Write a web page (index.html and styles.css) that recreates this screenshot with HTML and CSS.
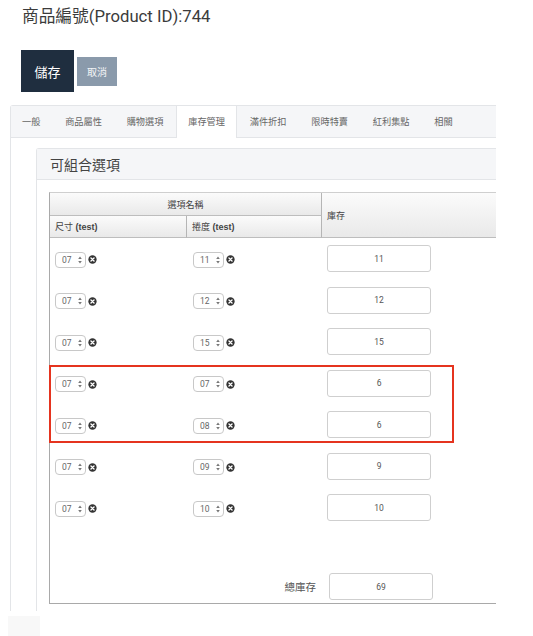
FILE: index.html
```html
<!DOCTYPE html>
<html lang="zh-Hant">
<head>
<meta charset="utf-8">
<title>商品編號</title>
<link rel="stylesheet" href="styles.css">
</head>
<body>
<div class="page">
  <h1 class="title">商品編號(Product ID):744</h1>
  <div class="actions">
    <button class="btn btn-save">儲存</button>
    <button class="btn btn-cancel">取消</button>
  </div>
  <div class="tabs-wrap">
    <ul class="tabs">
      <li class="tab first">一般</li>
      <li class="tab">商品屬性</li>
      <li class="tab">購物選項</li>
      <li class="tab active">庫存管理</li>
      <li class="tab">滿件折扣</li>
      <li class="tab">限時特賣</li>
      <li class="tab">紅利集點</li>
      <li class="tab">相關</li>
    </ul>
    <div class="tab-content">
      <div class="panel">
        <div class="panel-head">可組合選項</div>
        <div class="panel-body">
          <div class="grid-wrap">
            <table class="grid">
              <colgroup><col class="c1"><col class="c2"><col class="c3"></colgroup>
              <thead>
                <tr><th colspan="2" class="center">選項名稱</th><th rowspan="2" class="stock-h">庫存</th></tr>
                <tr><th>尺寸 <b>(test)</b></th><th>捲度 <b>(test)</b></th></tr>
              </thead>
              <tbody>
                <tr><td><span class="sel">07<svg class="arr" viewBox="0 0 4 8"><path d="M2 0.5 L3.8 3 H0.2Z M2 7.5 L3.8 5 H0.2Z"/></svg></span><svg class="rm" viewBox="0 0 10 10"><circle cx="5" cy="5" r="4.6"/><path d="M3.3 3.3 L6.7 6.7 M6.7 3.3 L3.3 6.7"/></svg></td><td><span class="sel">11<svg class="arr" viewBox="0 0 4 8"><path d="M2 0.5 L3.8 3 H0.2Z M2 7.5 L3.8 5 H0.2Z"/></svg></span><svg class="rm" viewBox="0 0 10 10"><circle cx="5" cy="5" r="4.6"/><path d="M3.3 3.3 L6.7 6.7 M6.7 3.3 L3.3 6.7"/></svg></td><td><span class="inp">11</span></td></tr>
                <tr><td><span class="sel">07<svg class="arr" viewBox="0 0 4 8"><path d="M2 0.5 L3.8 3 H0.2Z M2 7.5 L3.8 5 H0.2Z"/></svg></span><svg class="rm" viewBox="0 0 10 10"><circle cx="5" cy="5" r="4.6"/><path d="M3.3 3.3 L6.7 6.7 M6.7 3.3 L3.3 6.7"/></svg></td><td><span class="sel">12<svg class="arr" viewBox="0 0 4 8"><path d="M2 0.5 L3.8 3 H0.2Z M2 7.5 L3.8 5 H0.2Z"/></svg></span><svg class="rm" viewBox="0 0 10 10"><circle cx="5" cy="5" r="4.6"/><path d="M3.3 3.3 L6.7 6.7 M6.7 3.3 L3.3 6.7"/></svg></td><td><span class="inp">12</span></td></tr>
                <tr><td><span class="sel">07<svg class="arr" viewBox="0 0 4 8"><path d="M2 0.5 L3.8 3 H0.2Z M2 7.5 L3.8 5 H0.2Z"/></svg></span><svg class="rm" viewBox="0 0 10 10"><circle cx="5" cy="5" r="4.6"/><path d="M3.3 3.3 L6.7 6.7 M6.7 3.3 L3.3 6.7"/></svg></td><td><span class="sel">15<svg class="arr" viewBox="0 0 4 8"><path d="M2 0.5 L3.8 3 H0.2Z M2 7.5 L3.8 5 H0.2Z"/></svg></span><svg class="rm" viewBox="0 0 10 10"><circle cx="5" cy="5" r="4.6"/><path d="M3.3 3.3 L6.7 6.7 M6.7 3.3 L3.3 6.7"/></svg></td><td><span class="inp">15</span></td></tr>
                <tr><td><span class="sel">07<svg class="arr" viewBox="0 0 4 8"><path d="M2 0.5 L3.8 3 H0.2Z M2 7.5 L3.8 5 H0.2Z"/></svg></span><svg class="rm" viewBox="0 0 10 10"><circle cx="5" cy="5" r="4.6"/><path d="M3.3 3.3 L6.7 6.7 M6.7 3.3 L3.3 6.7"/></svg></td><td><span class="sel">07<svg class="arr" viewBox="0 0 4 8"><path d="M2 0.5 L3.8 3 H0.2Z M2 7.5 L3.8 5 H0.2Z"/></svg></span><svg class="rm" viewBox="0 0 10 10"><circle cx="5" cy="5" r="4.6"/><path d="M3.3 3.3 L6.7 6.7 M6.7 3.3 L3.3 6.7"/></svg></td><td><span class="inp">6</span></td></tr>
                <tr><td><span class="sel">07<svg class="arr" viewBox="0 0 4 8"><path d="M2 0.5 L3.8 3 H0.2Z M2 7.5 L3.8 5 H0.2Z"/></svg></span><svg class="rm" viewBox="0 0 10 10"><circle cx="5" cy="5" r="4.6"/><path d="M3.3 3.3 L6.7 6.7 M6.7 3.3 L3.3 6.7"/></svg></td><td><span class="sel">08<svg class="arr" viewBox="0 0 4 8"><path d="M2 0.5 L3.8 3 H0.2Z M2 7.5 L3.8 5 H0.2Z"/></svg></span><svg class="rm" viewBox="0 0 10 10"><circle cx="5" cy="5" r="4.6"/><path d="M3.3 3.3 L6.7 6.7 M6.7 3.3 L3.3 6.7"/></svg></td><td><span class="inp">6</span></td></tr>
                <tr><td><span class="sel">07<svg class="arr" viewBox="0 0 4 8"><path d="M2 0.5 L3.8 3 H0.2Z M2 7.5 L3.8 5 H0.2Z"/></svg></span><svg class="rm" viewBox="0 0 10 10"><circle cx="5" cy="5" r="4.6"/><path d="M3.3 3.3 L6.7 6.7 M6.7 3.3 L3.3 6.7"/></svg></td><td><span class="sel">09<svg class="arr" viewBox="0 0 4 8"><path d="M2 0.5 L3.8 3 H0.2Z M2 7.5 L3.8 5 H0.2Z"/></svg></span><svg class="rm" viewBox="0 0 10 10"><circle cx="5" cy="5" r="4.6"/><path d="M3.3 3.3 L6.7 6.7 M6.7 3.3 L3.3 6.7"/></svg></td><td><span class="inp">9</span></td></tr>
                <tr><td><span class="sel">07<svg class="arr" viewBox="0 0 4 8"><path d="M2 0.5 L3.8 3 H0.2Z M2 7.5 L3.8 5 H0.2Z"/></svg></span><svg class="rm" viewBox="0 0 10 10"><circle cx="5" cy="5" r="4.6"/><path d="M3.3 3.3 L6.7 6.7 M6.7 3.3 L3.3 6.7"/></svg></td><td><span class="sel">10<svg class="arr" viewBox="0 0 4 8"><path d="M2 0.5 L3.8 3 H0.2Z M2 7.5 L3.8 5 H0.2Z"/></svg></span><svg class="rm" viewBox="0 0 10 10"><circle cx="5" cy="5" r="4.6"/><path d="M3.3 3.3 L6.7 6.7 M6.7 3.3 L3.3 6.7"/></svg></td><td><span class="inp">10</span></td></tr>
              </tbody>
              <tfoot>
                <tr><td colspan="2" class="total-label">總庫存</td><td class="total-cell"><span class="inp">69</span></td></tr>
              </tfoot>
            </table>
            <div class="highlight"></div>
          </div>
        </div>
      </div>
    </div>
  </div>
  <div class="totop"></div>
</div>
</body>
</html>
```
FILE: styles.css
```css
* { box-sizing: border-box; }
body { margin: 0; background: #fff; font-family: Roboto, "Noto Sans CJK TC", sans-serif; color: #333; }
.page { width: 533px; height: 636px; overflow: hidden; }

.title { margin: 0; padding: 6px 0 0 22px; font-size: 16.7px; font-weight: 400; line-height: 22px; color: #3b3b3b; }

.actions { display: flex; align-items: center; gap: 3px; margin: 22px 0 0 21px; }
.btn { border: 0; padding: 0; color: #fff; font-family: "Noto Sans CJK TC", sans-serif; }
.btn-save { width: 53px; height: 42px; background: #1f2e3f; font-size: 13px; }
.btn-cancel { width: 40px; height: 29px; background: #8a9aab; font-size: 10px; color: #f2f4f6; }

.tabs-wrap { margin: 13px 0 0 10px; width: 486px; border-left: 1px solid #e3e5e8; border-top-left-radius: 3px; overflow: hidden; }
.tabs { display: flex; list-style: none; margin: 0; padding: 0; height: 33px; background: #f5f6f8; border-top: 1px solid #e3e5e8; border-bottom: 1px solid #e3e5e8; }
.tab { padding: 0 12.4px; font-size: 9.2px; line-height: 31px; color: #666; font-family: "Noto Sans CJK TC", sans-serif; white-space: nowrap; }
.tab.first { padding-left: 11px; }
.tab.active { background: #fff; border-left: 1px solid #e3e5e8; border-right: 1px solid #e3e5e8; height: 32px; padding: 0 11.4px; }

.tab-content { padding: 10px 0 0 25px; }
.panel { border-left: 1px solid #e3e5e8; border-top: 1px solid #e3e5e8; border-top-left-radius: 3px; margin-right: -40px; }
.panel-head { height: 31px; background: #f5f6f8; border-bottom: 1px solid #e3e5e8; padding-left: 13px; font-size: 14px; line-height: 30px; color: #444; font-family: "Noto Sans CJK TC", sans-serif; }
.panel-body { padding: 12px 0 7px 12px; }

.grid-wrap { position: relative; }
.grid { border-collapse: separate; border-spacing: 0; width: 480px; table-layout: fixed; border-left: 1px solid #a9a9a9; border-top: 1px solid #cfcfcf; border-bottom: 1px solid #a9a9a9; font-family: "Liberation Sans", "Noto Sans CJK TC", sans-serif; }
.c1 { width: 137px; }
.c2 { width: 135px; }
.grid th { background: linear-gradient(#fbfbfb, #e9e9e9); font-size: 9px; font-weight: 400; color: #444; text-align: left; padding: 0 5px; border-right: 1px solid #b5b5b5; border-bottom: 1px solid #bdbdbd; }
.grid thead tr:first-child th { height: 23px; }
.grid thead tr:nth-child(2) th { height: 22px; }
.grid th.center { text-align: center; }
.grid th b { font-weight: 700; }
.grid th.stock-h { border-right: 0; }
.grid tbody td { height: 41.5px; padding: 0 0 0 5px; vertical-align: middle; }
.grid tbody td:nth-child(2) { padding-left: 6px; }
.grid tbody td:first-child { padding-left: 5px; }

.sel { display: inline-flex; align-items: center; justify-content: space-between; width: 31px; height: 16px; border: 1px solid #c8c8c8; border-radius: 4px; padding: 0 3px 0 6px; font-size: 8.5px; color: #666; font-family: Roboto, sans-serif; vertical-align: middle; }
.arr { width: 4px; height: 8px; fill: #777; }
.rm { width: 9px; height: 9px; margin-left: 2px; vertical-align: middle; }
.rm circle { fill: #333; }
.rm path { stroke: #fff; stroke-width: 1.5; stroke-linecap: round; }

.inp { display: flex; align-items: center; justify-content: center; width: 104px; height: 27px; border: 1px solid #cfcfcf; border-radius: 3px; font-size: 8.5px; color: #555; font-family: Roboto, sans-serif; }

.grid tfoot td { padding: 44.5px 0 3px; vertical-align: middle; }
.grid tfoot td.total-label { text-align: right; padding-right: 6px; font-size: 10.5px; color: #555; font-family: "Noto Sans CJK TC", sans-serif; }
.grid tfoot td.total-cell { padding-left: 7px; }

.highlight { position: absolute; left: 0; top: 173px; width: 405px; height: 78px; border: 2px solid #e5341f; }

.totop { margin: 5px 0 0 8px; width: 32px; height: 32px; background: #f8f8f8; }
```
